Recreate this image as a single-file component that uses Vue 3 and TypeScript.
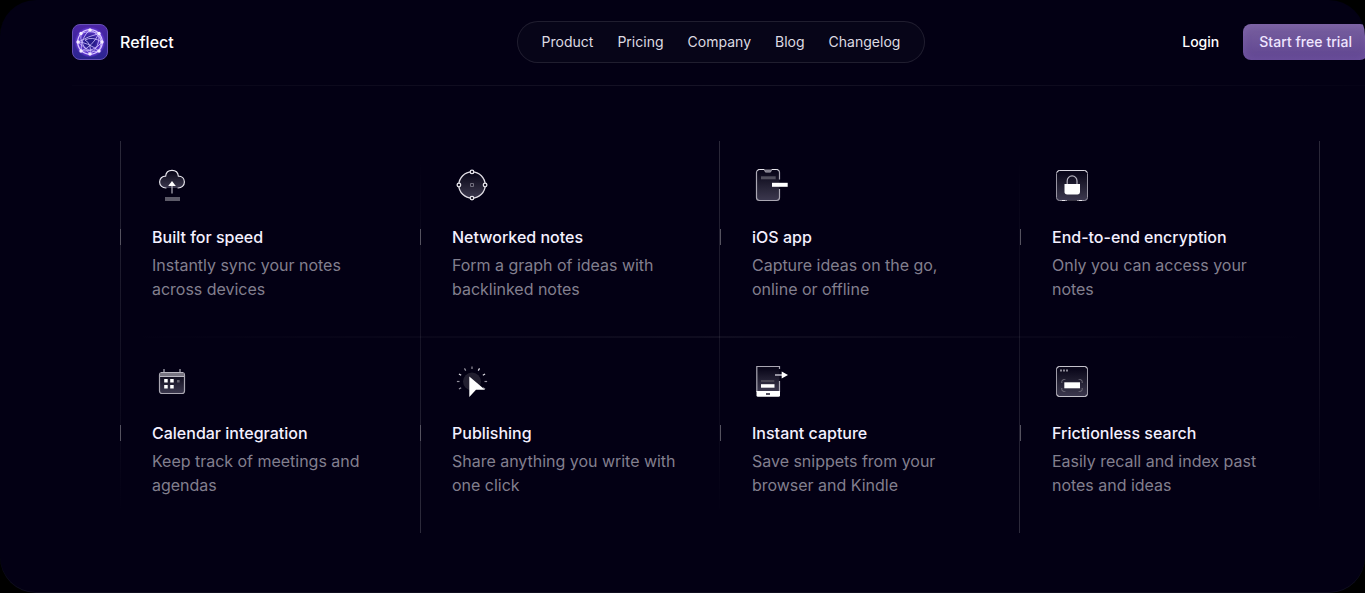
<script setup lang="ts">
interface Feature {
  icon: string
  title: string
  text: string
}

const links: string[] = ['Product', 'Pricing', 'Company', 'Blog', 'Changelog']

const features: Feature[] = [
  { icon: 'cloud', title: 'Built for speed', text: 'Instantly sync your notes across devices' },
  { icon: 'network', title: 'Networked notes', text: 'Form a graph of ideas with backlinked notes' },
  { icon: 'phone', title: 'iOS app', text: 'Capture ideas on the go, online or offline' },
  { icon: 'lock', title: 'End-to-end encryption', text: 'Only you can access your notes' },
  { icon: 'calendar', title: 'Calendar integration', text: 'Keep track of meetings and agendas' },
  { icon: 'cursor', title: 'Publishing', text: 'Share anything you write with one click' },
  { icon: 'capture', title: 'Instant capture', text: 'Save snippets from your browser and Kindle' },
  { icon: 'search', title: 'Frictionless search', text: 'Easily recall and index past notes and ideas' },
]

const rays: number[] = [-120, -90, -60, -30, 0, 30, 60, 90, 120]
</script>

<template>
  <div class="page">
    <svg class="defs" width="0" height="0" aria-hidden="true">
      <defs>
        <linearGradient id="fade" x1="0" y1="0" x2="0" y2="1">
          <stop offset="0.1" stop-color="#fff" stop-opacity="0.03" />
          <stop offset="1" stop-color="#e6e0ff" stop-opacity="0.25" />
        </linearGradient>
      </defs>
    </svg>
    <header class="header">
      <a class="brand">
        <svg class="logo" viewBox="0 0 36 36">
          <defs>
            <linearGradient id="logo-bg" x1="0" y1="0" x2="0" y2="1">
              <stop offset="0" stop-color="#4d25a6" />
              <stop offset="1" stop-color="#2a2590" />
            </linearGradient>
            <radialGradient id="logo-glow">
              <stop offset="0.3" stop-color="#241a88" />
              <stop offset="0.8" stop-color="#7040e0" />
              <stop offset="1" stop-color="#6a3ae0" stop-opacity="0" />
            </radialGradient>
          </defs>
          <rect x="0.5" y="0.5" width="35" height="35" rx="7.5" fill="url(#logo-bg)" stroke="#6650b4" />
          <circle cx="18" cy="18" r="15.5" fill="url(#logo-glow)" />
          <g fill="none" stroke="#cfc0ff" stroke-width="0.8">
            <circle cx="18" cy="18" r="12.3" stroke="#d8c8ff" stroke-width="1.2" />
            <path d="M9 9.5Q18 6 27 9.5M9 9.5Q7 19 18 30M27 9.5Q17 12 6 18M27 9.5Q31 18 27 27M18 6Q9 13 9 27M18 6Q26 9 30 18M6 18Q15 18 27 27M30 18Q22 28 9 27M9 27Q20 23 27 9.5M6 18Q18 30 27 27M13 16Q20 12 30 18M18 30Q20 20 13 16M18 30Q28 24 27 9.5" />
          </g>
          <g fill="#f3edff">
            <circle cx="18" cy="6" r="1.7" /><circle cx="27" cy="9.5" r="1.7" />
            <circle cx="30" cy="18" r="1.7" /><circle cx="27" cy="27" r="1.7" />
            <circle cx="18" cy="30" r="1.7" /><circle cx="9" cy="27" r="1.7" />
            <circle cx="6" cy="18" r="1.7" /><circle cx="9" cy="9.5" r="1.7" />
          </g>
        </svg>
        <span>Reflect</span>
      </a>
      <nav class="nav">
        <a v-for="link in links" :key="link">{{ link }}</a>
      </nav>
      <div class="actions">
        <a class="login">Login</a>
        <a class="trial">Start free trial</a>
      </div>
    </header>

    <main class="grid">
      <i v-for="n in 5" :key="n" class="rule" :class="'rule-' + n"></i>
      <i class="divider"></i>
      <section v-for="f in features" :key="f.title" class="cell">
        <svg class="icon" viewBox="0 0 40 40" fill="none">
          <template v-if="f.icon === 'cloud'">
            <path d="M14 23H12.8A5.6 5.6 0 0 1 13.6 11.3C14 7.6 16.5 5.4 20 5.4S26 7.6 26.4 11.3A5.6 5.6 0 0 1 27.2 23H26Z" fill="url(#fade)" />
            <path d="M14.4 23C10.5 23.2 7.6 20.5 7.6 17S10.2 11.2 13.6 11.2C14 7.6 16.5 5.4 20 5.4S26 7.6 26.4 11.2C29.8 11.2 32.4 13.5 32.4 17S29.5 23.2 25.6 23" stroke="#e4e2ea" stroke-width="1.2" />
            <path d="M19.4 20h1.2v8.5h-1.2z" fill="#b5b2be" /><path d="M20 16l3.8 5h-7.6z" fill="#fff" />
            <path d="M13 32h15v4H13z" fill="#5c5a68" />
          </template>
          <template v-else-if="f.icon === 'network'">
            <circle cx="20" cy="20" r="13.2" fill="url(#fade)" stroke="#e0dde5" stroke-width="1.3" />
            <g fill="#0b0819" stroke="#e6e4eb" stroke-width="1.3">
              <circle cx="20" cy="6.9" r="1.8" /><circle cx="33.1" cy="20" r="1.8" />
              <circle cx="20" cy="33.1" r="1.8" /><circle cx="6.9" cy="20" r="1.8" />
            </g>
            <path d="M18.5 18.5h3v3h-3z" stroke="#716e7d" />
          </template>
          <template v-else-if="f.icon === 'phone'">
            <rect x="4.5" y="4.5" width="23" height="31" rx="3" fill="url(#fade)" />
            <path d="M27.5 14.5V7.5a3 3 0 0 0-3-3H20c-1 0-1 2.5-2 2.5h-4c-1 0-1-2.5-2-2.5H7.5a3 3 0 0 0-3 3v25a3 3 0 0 0 3 3h17a3 3 0 0 0 3-3V24" stroke="#aaa7b3" stroke-width="1.2" />
            <path d="M12 4.5h8L18 7h-4z" fill="#85828f" />
            <path d="M5.5 5.5Q6.2 4.5 7.5 4.5H12M20 4.5h4.5q1.3 0 2 1" stroke="#e8e6ec" />
            <path d="M9 11.3h14.7v3H9z" fill="#514f5d" />
            <path d="M20 17.8h15.7v4H20z" fill="#fff" />
          </template>
          <template v-else-if="f.icon === 'lock'">
            <rect x="4.5" y="5.5" width="31" height="30" rx="3" fill="url(#fade)" stroke="#9895a2" />
            <path d="M5 7.5q.5-2 2.5-2h25q2 0 2.5 2" stroke="#d9d7df" />
            <path d="M10 35.5h3M27 35.5h3" stroke="#e8e6ec" /><path d="M15 35.5h10" stroke="#34313f" />
            <path d="M15.2 19.5V16a4.9 5.2 0 0 1 9.8 0v3.5" stroke="#b4b1bd" stroke-width="1.2" />
            <path d="M12.5 19h15.5v7.8q0 2.7-2.7 2.7H15.2q-2.7 0-2.7-2.7z" fill="#fff" />
          </template>
          <template v-else-if="f.icon === 'calendar'">
            <rect x="7.5" y="11.5" width="25" height="21" rx="2.5" fill="url(#fade)" stroke="#aaa7b2" stroke-width="1.2" />
            <path d="M8 12h24v3.5H8z" fill="#777481" /><path d="M8 15.5h24M9 11.5h22" stroke="#b9b6c1" />
            <path d="M12 8v3M28 8v3" stroke="#8d8a96" stroke-width="1.5" />
            <path d="M12.2 18.1h3.5v3.5h-3.5zM18.2 18.1h3.5v3.5h-3.5zM12.2 24.1h3.5v3.5h-3.5zM18.2 24.1h3.5v3.5h-3.5z" fill="#fff" />
            <path d="M25 19h2.6v2.5H25z" fill="#65626f" />
          </template>
          <template v-else-if="f.icon === 'cursor'">
            <circle cx="20" cy="20.5" r="9" fill="#221f30" />
            <path v-for="a in rays" :key="a" d="M20 8v-2.6" :transform="`rotate(${a} 20 20.5)`" :stroke="Math.abs(a) === 60 || a === 30 ? '#dedce4' : '#94919d'" stroke-width="1.2" />
            <path d="M17.3 15.5L33 28.8H24L17.3 36z" fill="#fff" />
          </template>
          <template v-else-if="f.icon === 'capture'">
            <path d="M5 5.5h22.5v25H5z" fill="url(#fade)" />
            <path d="M27.5 8V5.5H4.8V31M27.5 20v11" stroke="#aaa7b3" stroke-width="1.2" />
            <path d="M9 19h13.3v2H9z" fill="#464351" /><path d="M9 23.2h13.5v3.5H9z" fill="#fff" />
            <path d="M4.5 30h23.5v4.2q0 1.5-1.5 1.5H6q-1.5 0-1.5-1.5z" fill="#fff" />
            <path d="M14 32h4v2h-4z" fill="#53505f" />
            <path d="M23 14h7.5" stroke="#b5b2be" stroke-width="1.6" /><path d="M29.7 10.4l6.3 3.6-6.3 3.6z" fill="#fff" />
          </template>
          <template v-else>
            <rect x="4.5" y="5.5" width="31" height="30" rx="2.5" fill="url(#fade)" stroke="#9d9aa6" />
            <path d="M5 7.5q.5-2 2.5-2h25q2 0 2.5 2M5 33.5q.5 2 2.5 2h25q2 0 2.5-2" stroke="#c5c3cc" />
            <path d="M8 8.5h2v2H8zM11 8.5h2v2h-2zM14 8.5h2v2h-2z" fill="#8c8996" />
            <path d="M9.8 22v-1.5q0-2 2.5-2h1M26.7 18.5h1q2.5 0 2.5 2V22M30.2 27v1.5q0 2-2.5 2h-1M13.3 30.5h-1q-2.5 0-2.5-2V27" stroke="#6e6b78" />
            <path d="M12.3 21.3H28v6H12.3z" fill="#fff" />
          </template>
        </svg>
        <h3>{{ f.title }}</h3>
        <p>{{ f.text }}</p>
      </section>
    </main>
  </div>
</template>

<style>
html,
body {
  background: #000;
  overflow: hidden;
}
</style>

<style scoped>
.page {
  box-sizing: border-box;
  height: 593px;
  overflow: hidden;
  border-radius: 36px;
  background: #030014;
  box-shadow: inset 0 -1px 0 rgba(255, 255, 255, 0.05);
  font-family: Inter, sans-serif;
  color: #f4f0ff;
}
.defs {
  position: absolute;
}
.header {
  position: relative;
  display: grid;
  grid-template-columns: 1fr auto 1fr;
  align-items: center;
  box-sizing: border-box;
  width: 1296px;
  height: 86px;
  margin-left: 72px;
  padding-bottom: 2px;
  font-size: 14px;
  line-height: 24px;
}
.header::after {
  content: '';
  position: absolute;
  left: 0;
  right: 0;
  bottom: 0;
  height: 1px;
  background: linear-gradient(90deg, rgba(255, 255, 255, 0.01), rgba(255, 255, 255, 0.08) 50%, rgba(255, 255, 255, 0.01));
}
.brand {
  display: flex;
  align-items: center;
  gap: 12px;
  font-size: 16px;
  font-weight: 500;
  color: #fff;
}
.logo {
  width: 36px;
  height: 36px;
}
.nav {
  display: flex;
  gap: 24px;
  margin: 0 -1px 0 1px;
  padding: 8px 24px;
  border: 1px solid rgba(255, 255, 255, 0.1);
  border-radius: 21px;
  background: rgba(255, 255, 255, 0.02);
  letter-spacing: 0.01px;
  color: #dddbe2;
}
.actions {
  display: flex;
  justify-content: flex-end;
  align-items: center;
  gap: 24px;
}
.login {
  font-weight: 500;
  color: #fff;
}
.trial {
  padding: 6px 16px;
  border-radius: 8px;
  font-weight: 500;
  letter-spacing: 0.05px;
  color: #efe5ff;
  background: linear-gradient(180deg, #78609f, #604591);
  box-shadow: inset 0 0 8px rgba(160, 125, 210, 0.3);
}
.grid {
  position: relative;
  display: grid;
  grid-template-columns: repeat(4, 300px);
  grid-auto-rows: 196px;
  width: 1200px;
  margin: 55px 0 0 120px;
}
.rule {
  position: absolute;
  top: 0;
  bottom: 0;
  width: 1px;
  background: linear-gradient(180deg, rgba(255, 255, 255, 0.16), rgba(255, 255, 255, 0) 95%);
}
.rule-1 { left: 0; }
.rule-2 { left: 300px; }
.rule-3 { left: 599px; }
.rule-4 { left: 899px; }
.rule-5 { left: 1199px; }
.rule-2,
.rule-4 {
  background: linear-gradient(0deg, rgba(255, 255, 255, 0.17), rgba(255, 255, 255, 0) 95%);
}
.divider {
  position: absolute;
  top: 195px;
  left: 0;
  right: 0;
  height: 2px;
  background: linear-gradient(90deg, transparent, rgba(255, 255, 255, 0.05) 50%, transparent);
}
.cell {
  position: relative;
  padding: 24px 36px 0 32px;
}
.cell::before {
  content: '';
  position: absolute;
  left: 0;
  top: 88px;
  width: 1px;
  height: 16px;
  background: #55525f;
}
.icon {
  display: block;
  width: 40px;
  height: 40px;
  margin-bottom: 20px;
}
h3 {
  margin: 0 0 4px;
  font-size: 16px;
  font-weight: 500;
  line-height: 24px;
}
p {
  margin: 0;
  font-size: 16px;
  line-height: 24px;
  letter-spacing: -0.02px;
  color: #827f8e;
}
</style>
